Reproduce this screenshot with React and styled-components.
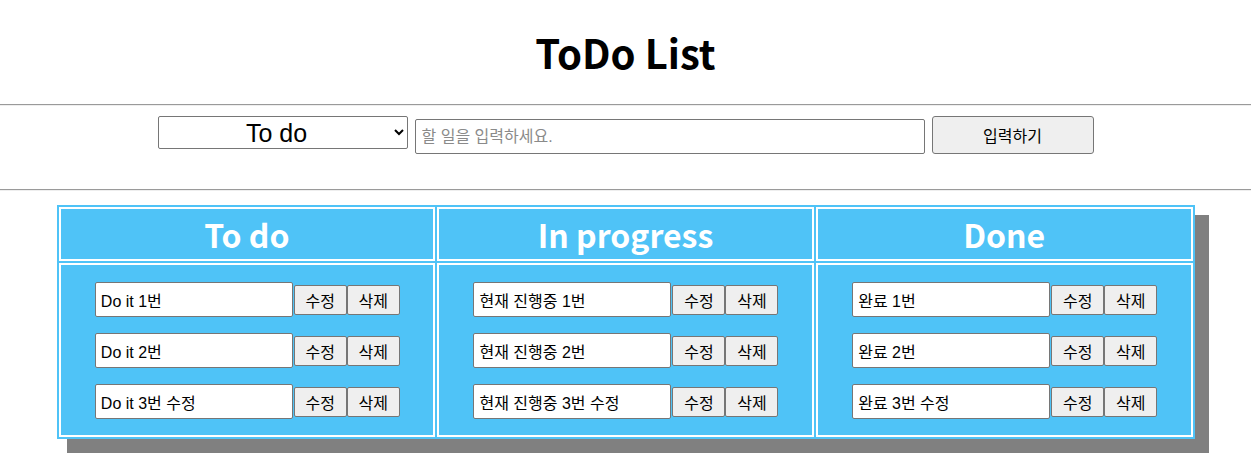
import React from "react";
import styled, { createGlobalStyle } from "styled-components";

const columns = [
  { title: "To do", items: ["Do it 1번", "Do it 2번", "Do it 3번 수정"] },
  { title: "In progress", items: ["현재 진행중 1번", "현재 진행중 2번", "현재 진행중 3번 수정"] },
  { title: "Done", items: ["완료 1번", "완료 2번", "완료 3번 수정"] },
];

export default function App() {
  return (
    <Page>
      <GlobalStyle />
      <Header>
        <Title>ToDo List</Title>
      </Header>
      <Divider />
      <Form onSubmit={(e) => e.preventDefault()}>
        <Select defaultValue="todo">
          <option value="todo">To do</option>
          <option value="progress">In progress</option>
          <option value="done">Done</option>
        </Select>
        <TextInput placeholder="할 일을 입력하세요." />
        <SubmitButton type="submit">입력하기</SubmitButton>
      </Form>
      <Divider />
      <BoardFrame>
        <Board>
          <thead>
            <tr>
              {columns.map((col) => (
                <HeadCell key={col.title}>{col.title}</HeadCell>
              ))}
            </tr>
          </thead>
          <tbody>
            <tr>
              {columns.map((col) => (
                <BodyCell key={col.title}>
                  <ItemList>
                    {col.items.map((item) => (
                      <Item key={item}>
                        <ItemInput defaultValue={item} />
                        <SmallButton>수정</SmallButton>
                        <SmallButton>삭제</SmallButton>
                      </Item>
                    ))}
                  </ItemList>
                </BodyCell>
              ))}
            </tr>
          </tbody>
        </Board>
      </BoardFrame>
    </Page>
  );
}

const GlobalStyle = createGlobalStyle`
  body {
    margin: 0;
    background: #fff;
    font-family: "Liberation Sans", "Noto Sans CJK KR", sans-serif;
  }
`;

const Page = styled.div`
  padding-bottom: 30px;
`;

const Header = styled.header`
  height: 104px;
  display: flex;
  align-items: center;
  justify-content: center;
`;

const Title = styled.h1`
  margin: 0;
  font-family: "Noto Sans CJK KR", sans-serif;
  font-size: 40px;
  font-weight: 700;
  color: #000;
  line-height: 1;
`;

const Divider = styled.hr`
  margin: 0;
  height: 0;
  border: none;
  border-top: 1px solid #9a9a9a;
  border-bottom: 1px solid #eeeeee;
`;

const Form = styled.form`
  height: 83px;
  box-sizing: border-box;
  padding-top: 10px;
  display: flex;
  justify-content: center;
  align-items: flex-start;
  gap: 7px;
`;

const Select = styled.select`
  width: 250px;
  height: 33px;
  font-family: "Liberation Sans", sans-serif;
  font-size: 25px;
  text-align: center;
  text-align-last: center;
  border: 1px solid #767676;
  border-radius: 2px;
  background: #fff;
  color: #000;
`;

const TextInput = styled.input`
  width: 510px;
  height: 35px;
  margin-top: 3px;
  box-sizing: border-box;
  padding: 1px 6px;
  font-family: "Liberation Sans", "Noto Sans CJK KR", sans-serif;
  font-size: 16px;
  border: 1px solid #767676;
  border-radius: 2px;
  &::placeholder {
    color: #8a8a8a;
  }
`;

const SubmitButton = styled.button`
  width: 162px;
  height: 38px;
  font-family: "Liberation Sans", "Noto Sans CJK KR", sans-serif;
  font-size: 16px;
  color: #000;
  background: #efefef;
  border: 1px solid #767676;
  border-radius: 3px;
`;

const BoardFrame = styled.div`
  width: 1138px;
  margin: 14px auto 0;
  background: #4fc3f7;
  box-shadow: 12px 12px 0 2px #808080;
`;

const Board = styled.table`
  width: 100%;
  table-layout: fixed;
  border-collapse: separate;
  border-spacing: 2px;
`;

const HeadCell = styled.th`
  border: 2px solid #fff;
  height: 50px;
  padding: 0;
  font-family: "Noto Sans CJK KR", sans-serif;
  font-size: 32px;
  font-weight: 700;
  color: #fff;
  line-height: 50px;
`;

const BodyCell = styled.td`
  border: 2px solid #fff;
  padding: 17px 0 16px;
`;

const ItemList = styled.div`
  display: flex;
  flex-direction: column;
  align-items: center;
  gap: 16px;
`;

const Item = styled.div`
  display: flex;
  align-items: center;
  margin-left: 1px;
`;

const ItemInput = styled.input`
  width: 198px;
  height: 35px;
  box-sizing: border-box;
  padding: 1px 5px;
  font-family: "Liberation Sans", "Noto Sans CJK KR", sans-serif;
  font-size: 16px;
  color: #000;
  border: 1px solid #767676;
  border-radius: 2px;
  margin-right: 1px;
`;

const SmallButton = styled.button`
  width: 53px;
  height: 30px;
  padding: 0;
  font-family: "Liberation Sans", "Noto Sans CJK KR", sans-serif;
  font-size: 16px;
  color: #000;
  background: #efefef;
  border: 1px solid #767676;
  border-radius: 2px;
`;
